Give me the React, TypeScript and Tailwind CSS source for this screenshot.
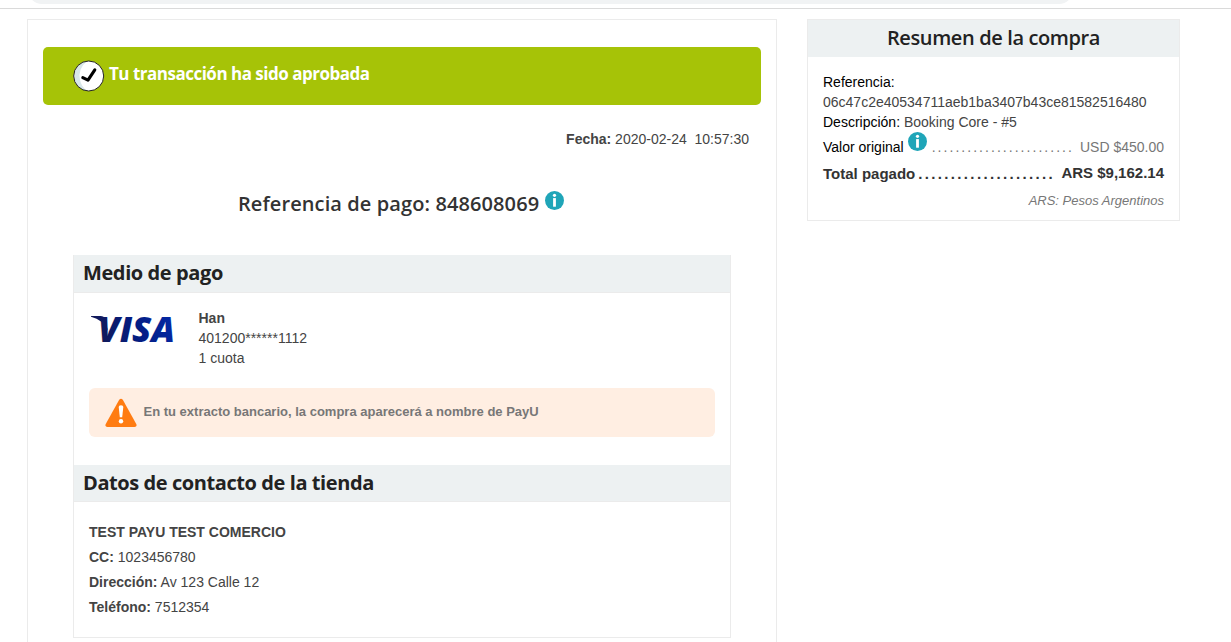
import type { ReactNode } from 'react';

function InfoIcon({ className = '' }: { className?: string }) {
  return (
    <svg viewBox="0 0 19 19" className={`h-[19px] w-[19px] shrink-0 ${className}`}>
      <circle cx="9.5" cy="9.5" r="9.5" fill="#1fa5b8" />
      <circle cx="9.5" cy="4.3" r="1.6" fill="#fff" />
      <rect x="8.1" y="7.1" width="2.8" height="8.6" fill="#fff" />
    </svg>
  );
}

function CheckIcon() {
  return (
    <svg viewBox="0 0 32 32" className="h-8 w-8 shrink-0">
      <circle cx="15.700" cy="16" r="15" fill="#fff" />
      <path d="M14 1.2A15 15 0 0 0 14 30.8A18 18 0 0 1 7 20A18 18 0 0 1 14 1.2Z" fill="#d8e7e9" />
      <circle cx="15.700" cy="16" r="15" fill="none" stroke="#222" strokeWidth="1" />
      <path d="M9.8 17.7L15 20.2L21.8 9.8" fill="none" stroke="#000" strokeWidth="3.1" strokeLinecap="round" strokeLinejoin="round" />
    </svg>
  );
}

function WarningIcon() {
  return (
    <svg viewBox="0 0 32 30" className="h-[30px] w-8 shrink-0">
      <path d="M14.2 1.8Q16 -.4 17.8 1.8L31.4 26.2Q32 29 29.6 29H2.4Q0 29 .6 26.2Z" fill="#ff7c12" />
      <path d="M13.7 9Q13.7 7.2 16 7.2T18.3 9L17.2 19.2H14.8Z" fill="#fff" />
      <circle cx="16" cy="23.2" r="2.2" fill="#fff" />
    </svg>
  );
}

function VisaLogo() {
  return (
    <svg viewBox="0 0 86 50" className="h-[50px] w-[86px] shrink-0 overflow-visible" role="img" aria-label="Visa">
      <defs>
        <linearGradient id="visa" gradientUnits="userSpaceOnUse" x1="4" y1="38" x2="82" y2="14">
          <stop offset="0" stopColor="#141952" />
          <stop offset="0.5" stopColor="#041c80" />
          <stop offset="1" stopColor="#0428a5" />
        </linearGradient>
      </defs>
      <path d="M0 12H9.500Q13.2 12 14 15L17 27Q12 15.400 0 12.700Z" fill="url(#visa)" />
      <text x="7" y="38" textLength="77" lengthAdjust="spacingAndGlyphs" fill="url(#visa)" className="font-['Open_Sans',sans-serif] text-[36px] font-extrabold italic">
        VISA
      </text>
    </svg>
  );
}

function SectionTitle({ children, className = '' }: { children: ReactNode; className?: string }) {
  return (
    <h2 className={`border-b border-[#ebebeb] bg-[#edf1f2] pl-[9px] font-['Open_Sans',sans-serif] text-[20px] leading-[36px] font-bold text-[#222] ${className}`}>
      {children}
    </h2>
  );
}

function Field({ label, value }: { label: string; value: string }) {
  return (
    <p>
      <b>{label}</b> {value}
    </p>
  );
}

export default function App() {
  return (
    <div className="h-[642px] overflow-hidden bg-white font-['Liberation_Sans',Arial,sans-serif] text-[14px] leading-5 text-[#444]">
      <div className="h-[9px] border-b border-[#dadada] pl-[28px]">
        <div className="h-1 w-[1045px] overflow-hidden">
          <div className="-mt-6 h-7 rounded-full bg-[#f1f3f4]" />
        </div>
      </div>

      <div className="flex items-start gap-[30px] pt-[10px] pl-[27px]">
        <main className="h-[700px] w-[750px] border border-[#ebebeb] px-[15px] pt-[27px]">
          <div className="flex h-[58px] items-start rounded-[5px] bg-[#a6c307] pt-[13px] pl-[30px]">
            <CheckIcon />
            <h1 className="ml-1 font-['Open_Sans',sans-serif] text-[17px] leading-7 font-bold tracking-[-0.5px] whitespace-nowrap text-white">
              Tu transacción ha sido aprobada
            </h1>
          </div>

          <p className="mt-[24px] pr-[12px] text-right whitespace-pre">
            <b>Fecha:</b> 2020-02-24{'  '}10:57:30
          </p>

          <div className="mt-[40px] flex h-[30px] items-start pl-[195px]">
            <h2 className="w-[301px] font-['Open_Sans',sans-serif] text-[20px] leading-[30px] font-semibold tracking-[0.1px] whitespace-nowrap text-[#333]">
              Referencia de pago: 848608069
            </h2>
            <InfoIcon className="mt-[2px] ml-[6px]" />
          </div>

          <section className="mt-[36px] ml-[30px] h-[383px] w-[658px] border border-t-0 border-[#ebebeb]">
            <SectionTitle className="h-[38px] tracking-[-0.4px]">Medio de pago</SectionTitle>
            <div className="flex h-[95px] pt-[15px] pl-[17px]">
              <div className="-mt-1">
                <VisaLogo />
              </div>
              <div className="ml-[21.500px]">
                <p className="font-bold">Han</p>
                <p>401200******1112</p>
                <p>1 cuota</p>
              </div>
            </div>
            <div className="mx-[15px] flex h-[49px] items-start rounded-md bg-[#ffeee2] pt-[10px] pl-4">
              <WarningIcon />
              <p className="mt-[4px] ml-[6.500px] text-[13px] font-bold whitespace-nowrap text-[#777]">
                En tu extracto bancario, la compra aparecerá a nombre de PayU
              </p>
            </div>
            <SectionTitle className="mt-[28px] h-[37px] tracking-[-0.42px]">Datos de contacto de la tienda</SectionTitle>
            <div className="pt-[18px] pl-[15px] leading-[25px]">
              <p className="font-bold">TEST PAYU TEST COMERCIO</p>
              <Field label="CC:" value="1023456780" />
              <Field label="Dirección:" value="Av 123 Calle 12" />
              <Field label="Teléfono:" value="7512354" />
            </div>
          </section>
        </main>

        <aside className="h-[202px] w-[373px] border border-[#ebebeb]">
          <h2 className="h-[37px] bg-[#edf1f2] text-center font-['Open_Sans',sans-serif] text-[20px] leading-[36px] font-semibold tracking-[-0.38px] text-[#222]">
            Resumen de la compra
          </h2>
          <div className="px-[15px] pt-[15px]">
            <p className="text-black">Referencia:</p>
            <p>06c47c2e40534711aeb1ba3407b43ce81582516480</p>
            <p>
              <span className="text-black">Descripción:</span> Booking Core - #5
            </p>
            <div className="flex h-[25px] items-end whitespace-nowrap">
              <span className="text-black">Valor original</span>
              <InfoIcon className="mb-[6px] ml-1" />
              <span className="ml-[5px] tracking-[2.04px] text-[#777]">........................</span>
              <span className="ml-auto text-[#777]">USD $450.00</span>
            </div>
            <div className="mt-[7px] flex h-5 text-[15px] font-bold whitespace-nowrap text-[#333]">
              <span>Total pagado</span>
              <span className="ml-[3px] tracking-[2.35px]">.....................</span>
              <span className="-mt-px ml-auto">ARS $9,162.14</span>
            </div>
            <p className="mt-[7px] text-right text-[13px] text-[#777] italic">ARS: Pesos Argentinos</p>
          </div>
        </aside>
      </div>
    </div>
  );
}
